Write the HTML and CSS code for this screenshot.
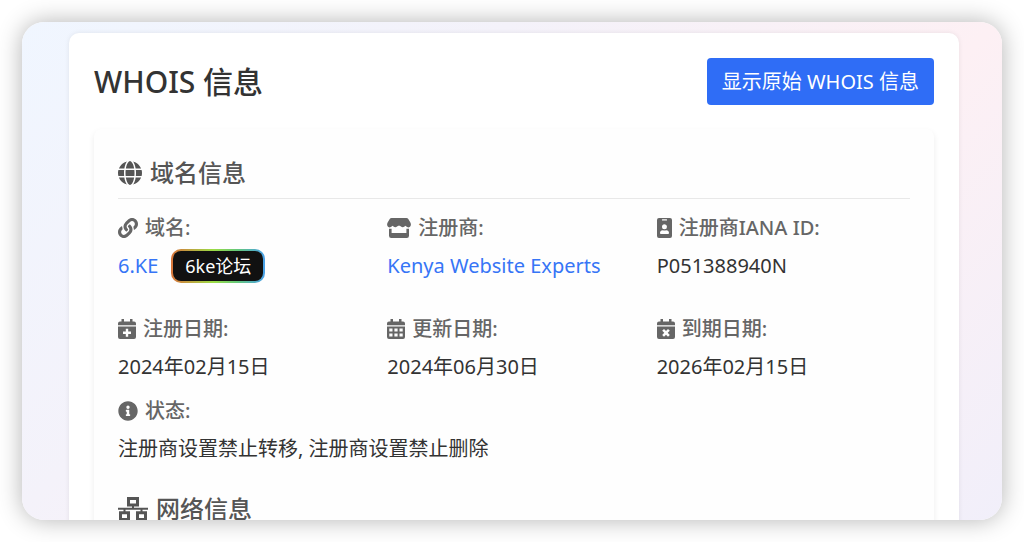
FILE: index.html
```html
<!DOCTYPE html>
<html lang="zh-CN">
<head>
<meta charset="utf-8">
<meta name="viewport" content="width=device-width, initial-scale=1">
<title>WHOIS 信息</title>
<link rel="stylesheet" href="styles.css">
</head>
<body>
<main class="frame">
  <article class="card">
    <header class="card-header">
      <h1 class="title">WHOIS 信息</h1>
      <button class="raw-button" type="button">显示原始 WHOIS 信息</button>
    </header>
    <div class="panel">
      <section class="section">
        <h2 class="section-title">
          <svg class="icon-large" viewBox="0 0 512 512" aria-hidden="true"><path d="M352 256c0 22.2-1.2 43.6-3.3 64l-185.3 0c-2.2-20.4-3.3-41.8-3.3-64s1.2-43.6 3.3-64l185.3 0c2.2 20.4 3.3 41.8 3.3 64zm28.8-64l123.1 0c5.3 20.5 8.1 41.9 8.1 64s-2.8 43.5-8.1 64l-123.1 0c2.1-20.6 3.2-42 3.2-64s-1.1-43.4-3.2-64zm112.6-32l-116.7 0c-10-63.9-29.8-117.4-55.3-151.6c78.3 20.7 142 77.5 171.9 151.6zm-149.1 0l-176.6 0c6.1-36.4 15.5-68.6 27-94.7c10.5-23.6 22.2-40.7 33.5-51.5C239.4 3.2 248.7 0 256 0s16.6 3.2 27.8 13.8c11.3 10.8 23 27.9 33.5 51.5c11.6 26 20.9 58.2 27 94.7zm-209 0L18.6 160C48.6 85.9 112.2 29.1 190.6 8.4C165.1 42.6 145.3 96.1 135.3 160zM8.1 192l123.1 0c-2.1 20.6-3.2 42-3.2 64s1.1 43.4 3.2 64L8.1 320C2.8 299.5 0 278.1 0 256s2.8-43.5 8.1-64zM194.7 446.6c-11.6-26-20.9-58.2-27-94.6l176.6 0c-6.1 36.4-15.5 68.6-27 94.6c-10.5 23.6-22.2 40.7-33.5 51.5C272.6 508.8 263.3 512 256 512s-16.6-3.2-27.8-13.8c-11.3-10.8-23-27.9-33.5-51.5zM135.3 352c10 63.9 29.8 117.4 55.3 151.6C112.2 482.9 48.6 426.1 18.6 352l116.7 0zm358.1 0c-30 74.1-93.6 130.9-171.9 151.6c25.5-34.2 45.2-87.7 55.3-151.6l116.7 0z"/></svg>
          域名信息
        </h2>
        <dl class="fields fields-registrar">
          <div class="field">
            <dt class="label"><svg class="icon" viewBox="0 0 512 512" aria-hidden="true"><path d="M326.612 185.391c59.747 59.809 58.927 155.698.36 214.59-.11.12-.24.25-.36.37l-67.2 67.2c-59.27 59.27-155.699 59.262-214.96 0-59.27-59.26-59.27-155.7 0-214.96l37.106-37.106c9.84-9.84 26.786-3.3 27.294 10.606.648 17.722 3.826 35.527 9.69 52.721 1.986 5.822.567 12.262-3.783 16.612l-13.087 13.087c-28.026 28.026-28.905 73.66-1.155 101.96 28.024 28.579 74.086 28.749 102.325.51l67.2-67.19c28.191-28.191 28.073-73.757 0-101.83-3.701-3.694-7.429-6.564-10.341-8.569a16.037 16.037 0 0 1-6.947-12.606c-.396-10.567 3.348-21.456 11.698-29.806l21.054-21.055c5.521-5.521 14.182-6.199 20.584-1.731a152.482 152.482 0 0 1 20.522 17.197zM467.547 44.449c-59.261-59.262-155.69-59.27-214.96 0l-67.2 67.2c-.12.12-.25.25-.36.37-58.566 58.892-59.387 154.781.36 214.59a152.454 152.454 0 0 0 20.521 17.196c6.402 4.468 15.064 3.789 20.584-1.731l21.054-21.055c8.35-8.35 12.094-19.239 11.698-29.806a16.037 16.037 0 0 0-6.947-12.606c-2.912-2.005-6.64-4.875-10.341-8.569-28.073-28.073-28.191-73.639 0-101.83l67.2-67.19c28.239-28.239 74.3-28.069 102.325.51 27.75 28.3 26.872 73.934-1.155 101.96l-13.087 13.087c-4.35 4.35-5.769 10.79-3.783 16.612 5.864 17.194 9.042 34.999 9.69 52.721.509 13.906 17.454 20.446 27.294 10.606l37.106-37.106c59.271-59.259 59.271-155.699.001-214.959z"/></svg>域名:</dt>
            <dd class="value value-linked"><a class="link" href="#domain">6.KE</a><a class="badge" href="#forum">6ke论坛</a></dd>
          </div>
          <div class="field">
            <dt class="label"><svg class="icon icon-store" viewBox="0 0 24 20" aria-hidden="true"><path d="M4.600 0h14.800q1.300 0 1.900 1L23.500 4.700q1 2.300-.5 4-1.800 1.400-3.700-.1l-.9-.8-.9.8q-1.800 1.300-3.600 0L12.900 7.800h-1.800l-1 .8q-1.800 1.300-3.600 0l-.9-.8-.9.8q-1.900 1.500-3.700.1Q-.5 7 .5 4.700L2.700 1Q3.300 0 4.600 0z"/><path d="M2 10.800h2.600V15h14.800v-4.200H22V17.800q0 2.200-2.200 2.200H4.200Q2 20 2 17.800z"/></svg>注册商:</dt>
            <dd class="value"><a class="link" href="#registrar">Kenya Website Experts</a></dd>
          </div>
          <div class="field">
            <dt class="label"><svg class="icon icon-badge" viewBox="0 0 15 20" aria-hidden="true"><path fill-rule="evenodd" d="M2 0h11q2 0 2 2v16q0 2-2 2H2q-2 0-2-2V2Q0 0 2 0zM5.500 1.300a.6.600 0 0 0 0 1.300h4a.6.600 0 0 0 0-1.300zM7.500 6.300a2.500 2.500 0 1 0 0 5 2.500 2.500 0 0 0 0-5zM5.900 12.200Q3 12.400 3 15.100q0 .9.900.9h7.200q.9 0 .9-.9 0-2.700-2.900-2.900-1.600.6-3.200 0z"/></svg>注册商IANA ID:</dt>
            <dd class="value">P051388940N</dd>
          </div>
        </dl>
        <dl class="fields">
          <div class="field">
            <dt class="label"><svg class="icon icon-calendar" viewBox="0 0 18 20" aria-hidden="true"><path d="M3.500 0H6v2.500h6V0h2.500v2.500H16q2 0 2 2v1.700H0V4.500q0-2 2-2h1.500z"/><path fill-rule="evenodd" d="M0 7.500h18V18q0 2-2 2H2q-2 0-2-2zM7.800 9.800v2.800H5v2.400h2.800v2.800h2.400V15H13v-2.400h-2.800V9.800z"/></svg>注册日期:</dt>
            <dd class="value">2024年02月15日</dd>
          </div>
          <div class="field">
            <dt class="label"><svg class="icon icon-calendar" viewBox="0 0 18 20" aria-hidden="true"><path d="M3.500 0H6v2.500h6V0h2.500v2.500H16q2 0 2 2v1.700H0V4.500q0-2 2-2h1.500z"/><path fill-rule="evenodd" d="M0 7.500h18V18q0 2-2 2H2q-2 0-2-2zM2.300 9.500v3h3.200v-3zm5.100 0v3h3.200v-3zm5.100 0v3h3.200v-3zM2.300 14.500v3h3.200v-3zm5.100 0v3h3.200v-3zm5.100 0v3h3.200v-3z"/></svg>更新日期:</dt>
            <dd class="value">2024年06月30日</dd>
          </div>
          <div class="field">
            <dt class="label"><svg class="icon icon-calendar" viewBox="0 0 18 20" aria-hidden="true"><path d="M3.500 0H6v2.500h6V0h2.500v2.500H16q2 0 2 2v1.700H0V4.500q0-2 2-2h1.500z"/><path fill-rule="evenodd" d="M0 7.500h18V18q0 2-2 2H2q-2 0-2-2zM7 9.900L5.200 11.700l2.100 2.100-2.100 2.100L7 17.700l2-2 2 2 1.800-1.800-2.100-2.100 2.100-2.100L11 9.900l-2 2z"/></svg>到期日期:</dt>
            <dd class="value">2026年02月15日</dd>
          </div>
        </dl>
        <dl class="fields fields-status">
          <div class="field">
            <dt class="label"><svg class="icon" viewBox="0 0 512 512" aria-hidden="true"><path d="M256 8C119.043 8 8 119.083 8 256c0 136.997 111.043 248 248 248s248-111.003 248-248C504 119.083 392.957 8 256 8zm0 110c23.196 0 42 18.804 42 42s-18.804 42-42 42-42-18.804-42-42 18.804-42 42-42zm56 254c0 6.627-5.373 12-12 12h-88c-6.627 0-12-5.373-12-12v-24c0-6.627 5.373-12 12-12h12v-64h-12c-6.627 0-12-5.373-12-12v-24c0-6.627 5.373-12 12-12h64c6.627 0 12 5.373 12 12v100h12c6.627 0 12 5.373 12 12v24z"/></svg>状态:</dt>
            <dd class="value">注册商设置禁止转移, 注册商设置禁止删除</dd>
          </div>
        </dl>
      </section>
      <section class="section">
        <h2 class="section-title">
          <svg class="icon-large icon-network" viewBox="0 0 30 24" aria-hidden="true"><path class="line" d="M10.500 1.500h9v6.500h-9zM2.500 15.800h8v6.700h-8zM19.500 15.800h8v6.700h-8z"/><path class="line wire" d="M0 11.800h30M15 8v4M6.500 12v4M23.500 12v4"/></svg>
          网络信息
        </h2>
      </section>
    </div>
  </article>
</main>
</body>
</html>
```
FILE: styles.css
```css
* {
  box-sizing: border-box;
}

body {
  margin: 0;
  padding: 22px;
  background: #fff;
  color: #333;
  font-family: "Noto Sans", "Noto Sans CJK SC", sans-serif;
  font-size: 20px;
  font-weight: 400;
  line-height: 30px;
}

.frame {
  height: calc(100vh - 44px);
  padding: 11px 43px 0 47px;
  overflow: hidden;
  border-radius: 22px;
  background: linear-gradient(135deg, #f0f6ff 0%, #f4f2fa 33%, #fdf0f4 66%, #f1effa 100%);
  box-shadow: 0 0 24px rgba(0, 0, 0, 0.3);
}

.card {
  padding: 25px;
  border-radius: 10px;
  background: #fff;
  box-shadow: 0 0 5px rgba(0, 0, 0, 0.08);
}

.card-header {
  display: flex;
  align-items: center;
  justify-content: space-between;
  margin-bottom: 24px;
}

.title {
  margin: 0;
  font-size: 30px;
  font-weight: 500;
  line-height: 44px;
}

.raw-button {
  padding: 8px 15px;
  border: 0;
  border-radius: 4px;
  background: #2f6df6;
  color: #fff;
  font: inherit;
  line-height: 31px;
  cursor: pointer;
}

.panel {
  padding: 25px 24px;
  border-radius: 8px;
  background: #fefefe;
  box-shadow: 0 3px 6px rgba(0, 0, 0, 0.08);
}

.section {
  margin-bottom: 26px;
}

.section-title {
  display: flex;
  align-items: center;
  gap: 8px;
  margin: 0 0 14px;
  padding-bottom: 6px;
  border-bottom: 1px solid #e8e8e8;
  color: #555;
  font-size: 24px;
  font-weight: 500;
  line-height: 38px;
}

.fields {
  display: grid;
  grid-template-columns: repeat(3, 1fr);
  gap: 16px;
  margin: 0 0 14px;
}

.fields-registrar {
  margin-bottom: 33px;
}

.fields-status {
  grid-template-columns: 1fr;
}

.field {
  display: flex;
  flex-direction: column;
  gap: 8px;
}

.label {
  display: flex;
  align-items: center;
  gap: 7px;
  color: #666;
  font-weight: 500;
}

.value {
  margin: 0;
}

.value-linked {
  display: flex;
  align-items: center;
  gap: 13px;
  height: 30px;
}

.link {
  color: #3675f6;
  text-decoration: none;
}

.badge {
  padding: 0 12px;
  border: 2px solid transparent;
  border-radius: 10px;
  background:
    linear-gradient(#111, #111) padding-box,
    linear-gradient(90deg, #d9753b, #9bdc45 45%, #65c878 70%, #48a0ea) border-box;
  color: #fff;
  font-size: 18px;
  text-decoration: none;
}

.icon,
.icon-large {
  flex: none;
  fill: currentColor;
}

.icon {
  width: 20px;
  height: 20px;
}

.icon-large {
  width: 24px;
  height: 24px;
}

.icon-store {
  width: 24px;
}

.icon-badge {
  width: 15px;
}

.icon-calendar {
  width: 18px;
}

.icon-network {
  width: 30px;
}

.line {
  fill: none;
  stroke: currentColor;
  stroke-width: 3;
}

.wire {
  stroke-width: 2;
}
```
